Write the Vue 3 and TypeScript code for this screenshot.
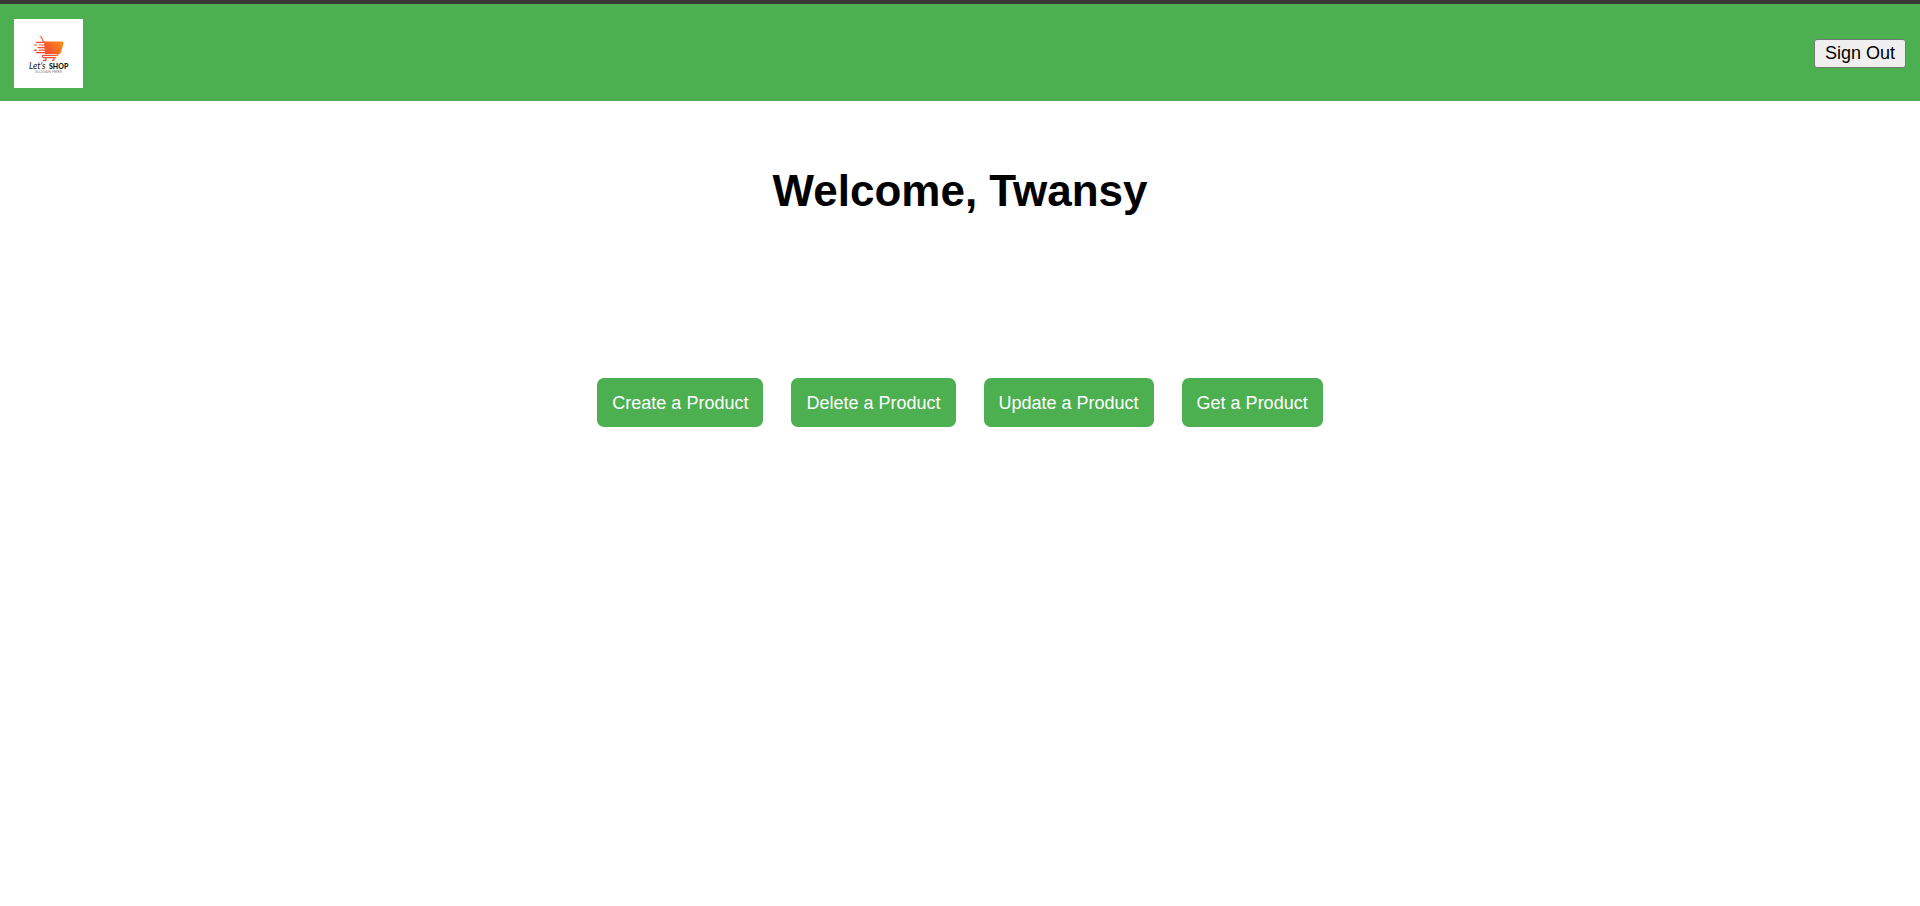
<script setup lang="ts">
const userName = 'Twansy'
const actions: string[] = [
  'Create a Product',
  'Delete a Product',
  'Update a Product',
  'Get a Product',
]
</script>

<template>
  <div class="page">
    <header class="bar">
      <a class="logo" href="#" aria-label="Let's Shop">
        <svg viewBox="0 0 69 69" aria-hidden="true">
          <defs>
            <linearGradient id="cart" x1="20" y1="42" x2="50" y2="20" gradientUnits="userSpaceOnUse">
              <stop offset="0" stop-color="#ec2b40" />
              <stop offset="0.5" stop-color="#f75a2d" />
              <stop offset="1" stop-color="#fb9412" />
            </linearGradient>
          </defs>
          <rect width="69" height="69" fill="#fff" />
          <g fill="none" stroke="url(#cart)" stroke-linecap="round" stroke-linejoin="round">
            <path stroke-width="1.2" d="M26 17.500q1.600 .3 2.100 2l.8 2.500q.3 1 1.500 1M44.500 34.500q-.5 1.800-2 1.800H30q-1.800 0-1.600 1.200t1.600 1.200h11.500" />
            <path stroke-width="1.200" d="M22.500 23.400h8M20.500 26h2M25.500 26h6M24 28.600h8M20.500 31.200h2M25.500 31.200h7M22.500 33.700h10" />
            <path stroke-width="1.400" d="M29.500 41.500h1.500q1 0 1-2M38.500 41.500q1.600 0 1.600-2" />
          </g>
          <path fill="url(#cart)" d="M30 22.500h18q1.800 0 1.500 1.800l-2.400 8.700q-.6 2-2.600 2H31z" />
          <text class="script" x="15" y="50">Let's</text>
          <text class="shop" x="35" y="50">SHOP</text>
          <text class="slogan" x="21" y="54">SLOGAN HERE</text>
        </svg>
      </a>
      <button class="sign-out" type="button">Sign Out</button>
    </header>
    <main>
      <h1>Welcome, {{ userName }}</h1>
      <nav class="actions" aria-label="Product actions">
        <button v-for="action in actions" :key="action" type="button">{{ action }}</button>
      </nav>
    </main>
  </div>
</template>

<style>
body {
  margin: 0;
  background: #fff;
}
</style>

<style scoped>
.page {
  font-family: "Liberation Sans", Arial, sans-serif;
  color: #000;
}
.bar {
  display: flex;
  align-items: center;
  justify-content: space-between;
  padding: 15px 14px 13px;
  border-top: 4px solid #383838;
  background: #4caf50;
}
.logo {
  display: block;
  width: 69px;
  height: 69px;
}
.logo svg {
  display: block;
  width: 100%;
  height: 100%;
}
.script {
  font: italic 9px Lato, sans-serif;
  fill: #111;
}
.shop {
  font: 900 7px Lato, sans-serif;
  fill: #111;
}
.slogan {
  font: 4px Lato, sans-serif;
  fill: #888;
}
.sign-out {
  box-sizing: border-box;
  height: 29px;
  padding: 0 10px;
  border: 1px solid #767676;
  border-radius: 3px;
  background: #efefef;
  color: #000;
  font: 18px/25px "Liberation Sans", Arial, sans-serif;
}
h1 {
  margin: 65px 0 0;
  text-align: center;
  font-size: 44px;
  line-height: 50px;
}
.actions {
  display: flex;
  flex-wrap: wrap;
  justify-content: center;
  gap: 28px;
  margin-top: 162px;
}
.actions button {
  padding: 15px 15px 13px;
  border: 0;
  border-radius: 7px;
  background: #4caf50;
  color: #fff;
  font: 18px/21px "Liberation Sans", Arial, sans-serif;
}
</style>
